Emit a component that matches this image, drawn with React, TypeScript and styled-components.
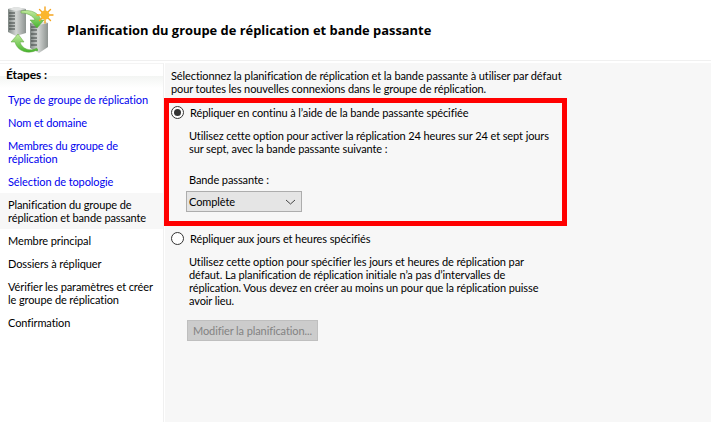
import React from 'react';
import styled, { createGlobalStyle } from 'styled-components';

const GlobalStyle = createGlobalStyle`
  html, body {
    margin: 0;
    padding: 0;
    background: #ffffff;
  }
  body {
    font-family: Lato, "Liberation Sans", sans-serif;
    font-size: 11px;
    letter-spacing: -0.1px;
    color: #000000;
  }
`;

const Page = styled.div`
  width: 711px;
  height: 422px;
  overflow: hidden;
  display: flex;
  flex-direction: column;
`;

const Header = styled.header`
  height: 60px;
  display: flex;
  align-items: center;
  gap: 11px;
  padding-left: 6px;
  border-bottom: 1px solid #f0f0f0;
  flex-shrink: 0;
`;

const Title = styled.h1`
  margin: 0;
  font-family: "Open Sans", sans-serif;
  font-size: 12.9px;
  font-weight: 700;
  letter-spacing: 0;
  white-space: nowrap;
`;

const Body = styled.div`
  flex: 1;
  display: flex;
  min-height: 0;
`;

const Sidebar = styled.nav`
  width: 163px;
  flex-shrink: 0;
  border-right: 1px solid #f0f0f0;
  border-top: 1px solid #f4f4f4;
  margin-top: 2px;
`;

const SidebarTitle = styled.div`
  height: 19px;
  padding: 4px 0 1px 6px;
  font-size: 12px;
  font-weight: 700;
  line-height: 13px;
  background: linear-gradient(#ffffff 12px, #f3f5f3 12px, #ffffff 24px);
`;

const Steps = styled.div`
  display: flex;
  flex-direction: column;
`;

const Step = styled.div<{ $link?: boolean; $active?: boolean }>`
  padding: 5px 8px;
  line-height: 13px;
  white-space: nowrap;
  color: ${(p) => (p.$link ? '#0000ee' : '#000000')};
  background: ${(p) => (p.$active ? '#f7f7f7' : 'transparent')};
`;

const Content = styled.main`
  flex: 1;
  background: #f7f7f7;
  margin: 2px 0 0 1px;
  padding-top: 6px;
`;

const Intro = styled.p`
  margin: 0 0 0 6px;
  line-height: 13px;
  white-space: nowrap;
`;

const Highlight = styled.section`
  width: 403px;
  height: 128px;
  box-sizing: border-box;
  border: 5px solid #ff0000;
  margin: 3px 0 0 -1px;
  padding: 1px 0 0 2px;
`;

const Option = styled.label`
  display: flex;
  align-items: center;
  gap: 6px;
  height: 16px;
  white-space: nowrap;
`;

const Radio = styled.span<{ $checked?: boolean }>`
  width: 13px;
  height: 13px;
  box-sizing: border-box;
  border-radius: 50%;
  border: 1px solid #333333;
  background: #ffffff;
  display: flex;
  align-items: center;
  justify-content: center;
  &::after {
    content: '';
    width: 7px;
    height: 7px;
    border-radius: 50%;
    background: ${(p) => (p.$checked ? '#333333' : 'transparent')};
  }
`;

const Description = styled.p`
  margin: 9px 0 0 18px;
  line-height: 13px;
  white-space: nowrap;
`;

const FieldLabel = styled.div`
  margin: 18px 0 0 18px;
  line-height: 13px;
`;

const Combo = styled.div`
  margin: 5px 0 0 15px;
  width: 116px;
  height: 21px;
  box-sizing: border-box;
  border: 1px solid #adadad;
  background: #e5e5e5;
  display: flex;
  align-items: center;
  justify-content: space-between;
  padding: 0 5px 0 2px;
`;

const SecondOption = styled.section`
  margin: 4px 0 0 6px;
`;

const DisabledButton = styled.button`
  display: block;
  margin: 13px 0 0 16px;
  width: 131px;
  height: 21px;
  padding: 0 0 1px;
  border: 1px solid #bfbfbf;
  background: #cccccc;
  color: #838383;
  font: inherit;
  letter-spacing: inherit;
  white-space: nowrap;
`;

const ServerIcon = () => (
  <svg width="50" height="50" viewBox="0 0 50 50" aria-hidden="true">
    <defs>
      <linearGradient id="srv" x1="0" x2="1" y1="0" y2="0">
        <stop offset="0" stopColor="#7f8784" />
        <stop offset="0.45" stopColor="#d3d6d4" />
        <stop offset="1" stopColor="#8d9390" />
      </linearGradient>
      <linearGradient id="arrow" x1="0" x2="0" y1="0" y2="1">
        <stop offset="0" stopColor="#c3ea9f" />
        <stop offset="1" stopColor="#45b52c" />
      </linearGradient>
    </defs>
    <path d="M2 4 L10 2 L20 4 L20 28 L10 31 L2 27 Z" fill="url(#srv)" />
    <path d="M2 4 L10 2 L20 4 L10 6 Z" fill="#e2e4e3" />
    <path d="M3 8 H9 M3 11 H9 M3 14 H9 M3 18 H9 M3 21 H9 M3 24 H9" stroke="#3d4241" strokeWidth="1.1" />
    <path d="M24 18 L33 16 L42 18 L42 42 L33 48 L24 43 Z" fill="url(#srv)" />
    <path d="M24 18 L33 16 L42 18 L33 20 Z" fill="#e2e4e3" />
    <path d="M25 22 H31 M25 25 H31 M25 29 H31 M25 33 H31 M25 36 H31 M25 40 H31" stroke="#3d4241" strokeWidth="1.1" />
    <circle cx="31" cy="45" r="1" fill="#3fb52b" />
    <path d="M15 6 C25 4 33 8 35 15 L38 15 L31 23 L24 15 L29 15 C27 11 22 8 15 8 Z" fill="url(#arrow)" stroke="#5fa23f" strokeWidth="0.5" />
    <path d="M31 43 C24 47 16 44 14 37 L18 37 L12 29 L5 37 L9 37 C11 46 22 50 31 45 Z" fill="url(#arrow)" stroke="#5fa23f" strokeWidth="0.5" />
    <g stroke="#f5a51f" strokeWidth="1.4" strokeLinecap="round">
      <path d="M39 2 V18 M31 10 H47 M33.5 4.5 L44.5 15.5 M44.5 4.5 L33.5 15.5" />
    </g>
    <circle cx="39" cy="10" r="4.5" fill="#fbb62d" />
  </svg>
);

const Chevron = () => (
  <svg width="11" height="6" viewBox="0 0 11 6" aria-hidden="true">
    <path d="M1 1 L5.5 5 L10 1" fill="none" stroke="#444444" strokeWidth="1" />
  </svg>
);

const steps: { label: React.ReactNode; link?: boolean; active?: boolean }[] = [
  { label: 'Type de groupe de réplication', link: true },
  { label: 'Nom et domaine', link: true },
  { label: <>Membres du groupe de<br />réplication</>, link: true },
  { label: 'Sélection de topologie', link: true },
  { label: <>Planification du groupe de<br />réplication et bande passante</>, active: true },
  { label: 'Membre principal' },
  { label: 'Dossiers à répliquer' },
  { label: <>Vérifier les paramètres et créer<br />le groupe de réplication</> },
  { label: 'Confirmation' },
];

export default function App() {
  return (
    <Page>
      <GlobalStyle />
      <Header>
        <ServerIcon />
        <Title>Planification du groupe de réplication et bande passante</Title>
      </Header>
      <Body>
        <Sidebar>
          <SidebarTitle>Étapes :</SidebarTitle>
          <Steps>
            {steps.map((step, index) => (
              <Step key={index} $link={step.link} $active={step.active}>
                {step.label}
              </Step>
            ))}
          </Steps>
        </Sidebar>
        <Content>
          <Intro>
            Sélectionnez la planification de réplication et la bande passante à utiliser par défaut
            <br />
            pour toutes les nouvelles connexions dans le groupe de réplication.
          </Intro>
          <Highlight>
            <Option>
              <Radio $checked />
              Répliquer en continu à l’aide de la bande passante spécifiée
            </Option>
            <Description>
              Utilisez cette option pour activer la réplication 24 heures sur 24 et sept jours
              <br />
              sur sept, avec la bande passante suivante :
            </Description>
            <FieldLabel>Bande passante :</FieldLabel>
            <Combo>
              Complète
              <Chevron />
            </Combo>
          </Highlight>
          <SecondOption>
            <Option>
              <Radio />
              Répliquer aux jours et heures spécifiés
            </Option>
            <Description>
              Utilisez cette option pour spécifier les jours et heures de réplication par
              <br />
              défaut. La planification de réplication initiale n’a pas d’intervalles de
              <br />
              réplication. Vous devez en créer au moins un pour que la réplication puisse
              <br />
              avoir lieu.
            </Description>
            <DisabledButton disabled>Modifier la planification...</DisabledButton>
          </SecondOption>
        </Content>
      </Body>
    </Page>
  );
}
